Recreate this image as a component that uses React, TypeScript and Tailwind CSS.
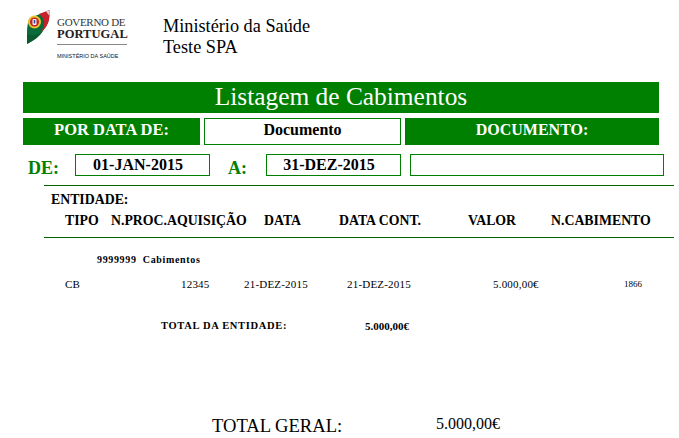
export default function App() {
  const serif = "font-['Liberation_Serif',serif]";
  return (
    <div className={`${serif} w-[679px] h-[438px] overflow-hidden bg-white text-black`}>
      {/* Header */}
      <div className="flex h-[82px] pl-[27px] pt-[10px]">
        <svg width="24" height="34" viewBox="0 0 24 34" className="shrink-0">
          <path d="M3 8 L23 0 L22 9 C20 17 14 26 0 34 L0 22 C0 16 1 11 3 8Z" fill="#0a6b3a" />
          <path d="M12 4 L23 0 L22 10 C21 15 18 19 14 22 C18 16 19 9 12 4Z" fill="#c8202c" />
          <path d="M19 1.5 L23 0 L22.5 6Z" fill="#e8c8c8" />
          <circle cx="7.5" cy="12" r="6.5" fill="#e6c432" />
          <circle cx="7.5" cy="12" r="4.5" fill="#c8202c" />
          <rect x="5.5" y="9" width="4" height="6" rx="1" fill="#f5f5f5" />
          <rect x="6.7" y="10" width="1.6" height="3.5" fill="#1d4fa0" />
          <path d="M0 24 L0 34 C8 30 13 26 16 21 C11 25 6 26 0 24Z" fill="#0a5a30" />
        </svg>
        <div className="ml-[6px] w-[70px] shrink-0 pt-[6px]">
          <div className="text-[11px] leading-[12px] whitespace-nowrap tracking-[-0.3px] text-[#333]">GOVERNO DE</div>
          <div className="text-[12.5px] leading-[12px] font-bold whitespace-nowrap tracking-[0.05px] text-[#222]">PORTUGAL</div>
          <div className="mt-[4px] h-px bg-[#888]" />
          <div className="mt-[8px] font-['Liberation_Sans',sans-serif] text-[5.5px] leading-[7px] whitespace-nowrap text-[#111]">MINISTÉRIO DA SAÚDE</div>
        </div>
        <div className="ml-[36px] pt-[6px] text-[18.25px] leading-[21px]">
          <div>Ministério da Saúde</div>
          <div>Teste SPA</div>
        </div>
      </div>

      {/* Title */}
      <div className="ml-[23px] w-[636px] h-[31px] bg-[#008000] text-white text-center text-[25.4px] leading-[28px]">
        Listagem de Cabimentos
      </div>

      {/* Filter labels */}
      <div className="ml-[23px] mt-[5px] w-[636px] h-[27px] grid grid-cols-[177px_197px_254px] gap-x-[4px] text-[16px] leading-[21px] font-bold">
        <div className="bg-[#008000] text-white text-center text-[16.5px] pt-[1px]">POR DATA DE:</div>
        <div className="border border-[#008000] text-center">Documento</div>
        <div className="bg-[#008000] text-white text-center pt-[1px]">DOCUMENTO:</div>
      </div>

      {/* Dates */}
      <div className="ml-[28px] mt-[9px] flex h-[22px] font-bold text-[16px] leading-[20px]">
        <div className="w-[47px] text-[#008000] text-[18px] leading-[28px] h-[22px]">DE:</div>
        <div className="w-[135px] h-[22px] border border-[#008000] text-center pr-[9px]">01-JAN-2015</div>
        <div className="ml-[18px] w-[38px] text-[#008000] text-[18px] leading-[28px] h-[22px]">A:</div>
        <div className="w-[135px] h-[22px] border border-[#008000] text-center pr-[9px]">31-DEZ-2015</div>
        <div className="ml-[9px] w-[254px] h-[22px] border border-[#008000]" />
      </div>

      {/* Table header */}
      <div className="ml-[44px] mt-[9px] w-[630px] h-[53px] border-y border-[#006400]">
        <div className="pl-[7px] pt-[6px] text-[13.8px] leading-[16px] font-bold">ENTIDADE:</div>
        <div className="mt-[5px] grid grid-cols-[46px_153px_75px_129px_83px_1fr] pl-[21px] text-[13.8px] leading-[16px] font-bold whitespace-nowrap">
          <div>TIPO</div>
          <div>N.PROC.AQUISIÇÃO</div>
          <div>DATA</div>
          <div>DATA CONT.</div>
          <div>VALOR</div>
          <div>N.CABIMENTO</div>
        </div>
      </div>

      {/* Entity */}
      <div className="ml-[97px] mt-[16px] text-[10px] leading-[12px] font-bold tracking-[0.65px] whitespace-pre">9999999  Cabimentos</div>

      {/* Row */}
      <div className="ml-[65px] mt-[11px] grid grid-cols-[116px_63px_103px_146px_1fr] h-[14px] text-[11px] leading-[14px] tracking-[0.2px] whitespace-nowrap">
        <div>CB</div>
        <div>12345</div>
        <div>21-DEZ-2015</div>
        <div>21-DEZ-2015</div>
        <div className="flex">
          <span className="w-[131px]">5.000,00€</span>
          <span className="text-[9px] leading-[12px] mt-px tracking-normal">1866</span>
        </div>
      </div>

      {/* Entity total */}
      <div className="ml-[161px] mt-[29px] flex font-bold whitespace-nowrap">
        <div className="w-[204px] text-[10.5px] leading-[12px] tracking-[0.68px]">TOTAL DA ENTIDADE:</div>
        <div className="text-[11px] leading-[12px]">5.000,00€</div>
      </div>

      {/* Grand total */}
      <div className="ml-[212px] mt-[83px] flex whitespace-nowrap">
        <div className="w-[224px] text-[18.6px] leading-[21px]">TOTAL GERAL:</div>
        <div className="text-[16px] leading-[18px]">5.000,00€</div>
      </div>
    </div>
  );
}
